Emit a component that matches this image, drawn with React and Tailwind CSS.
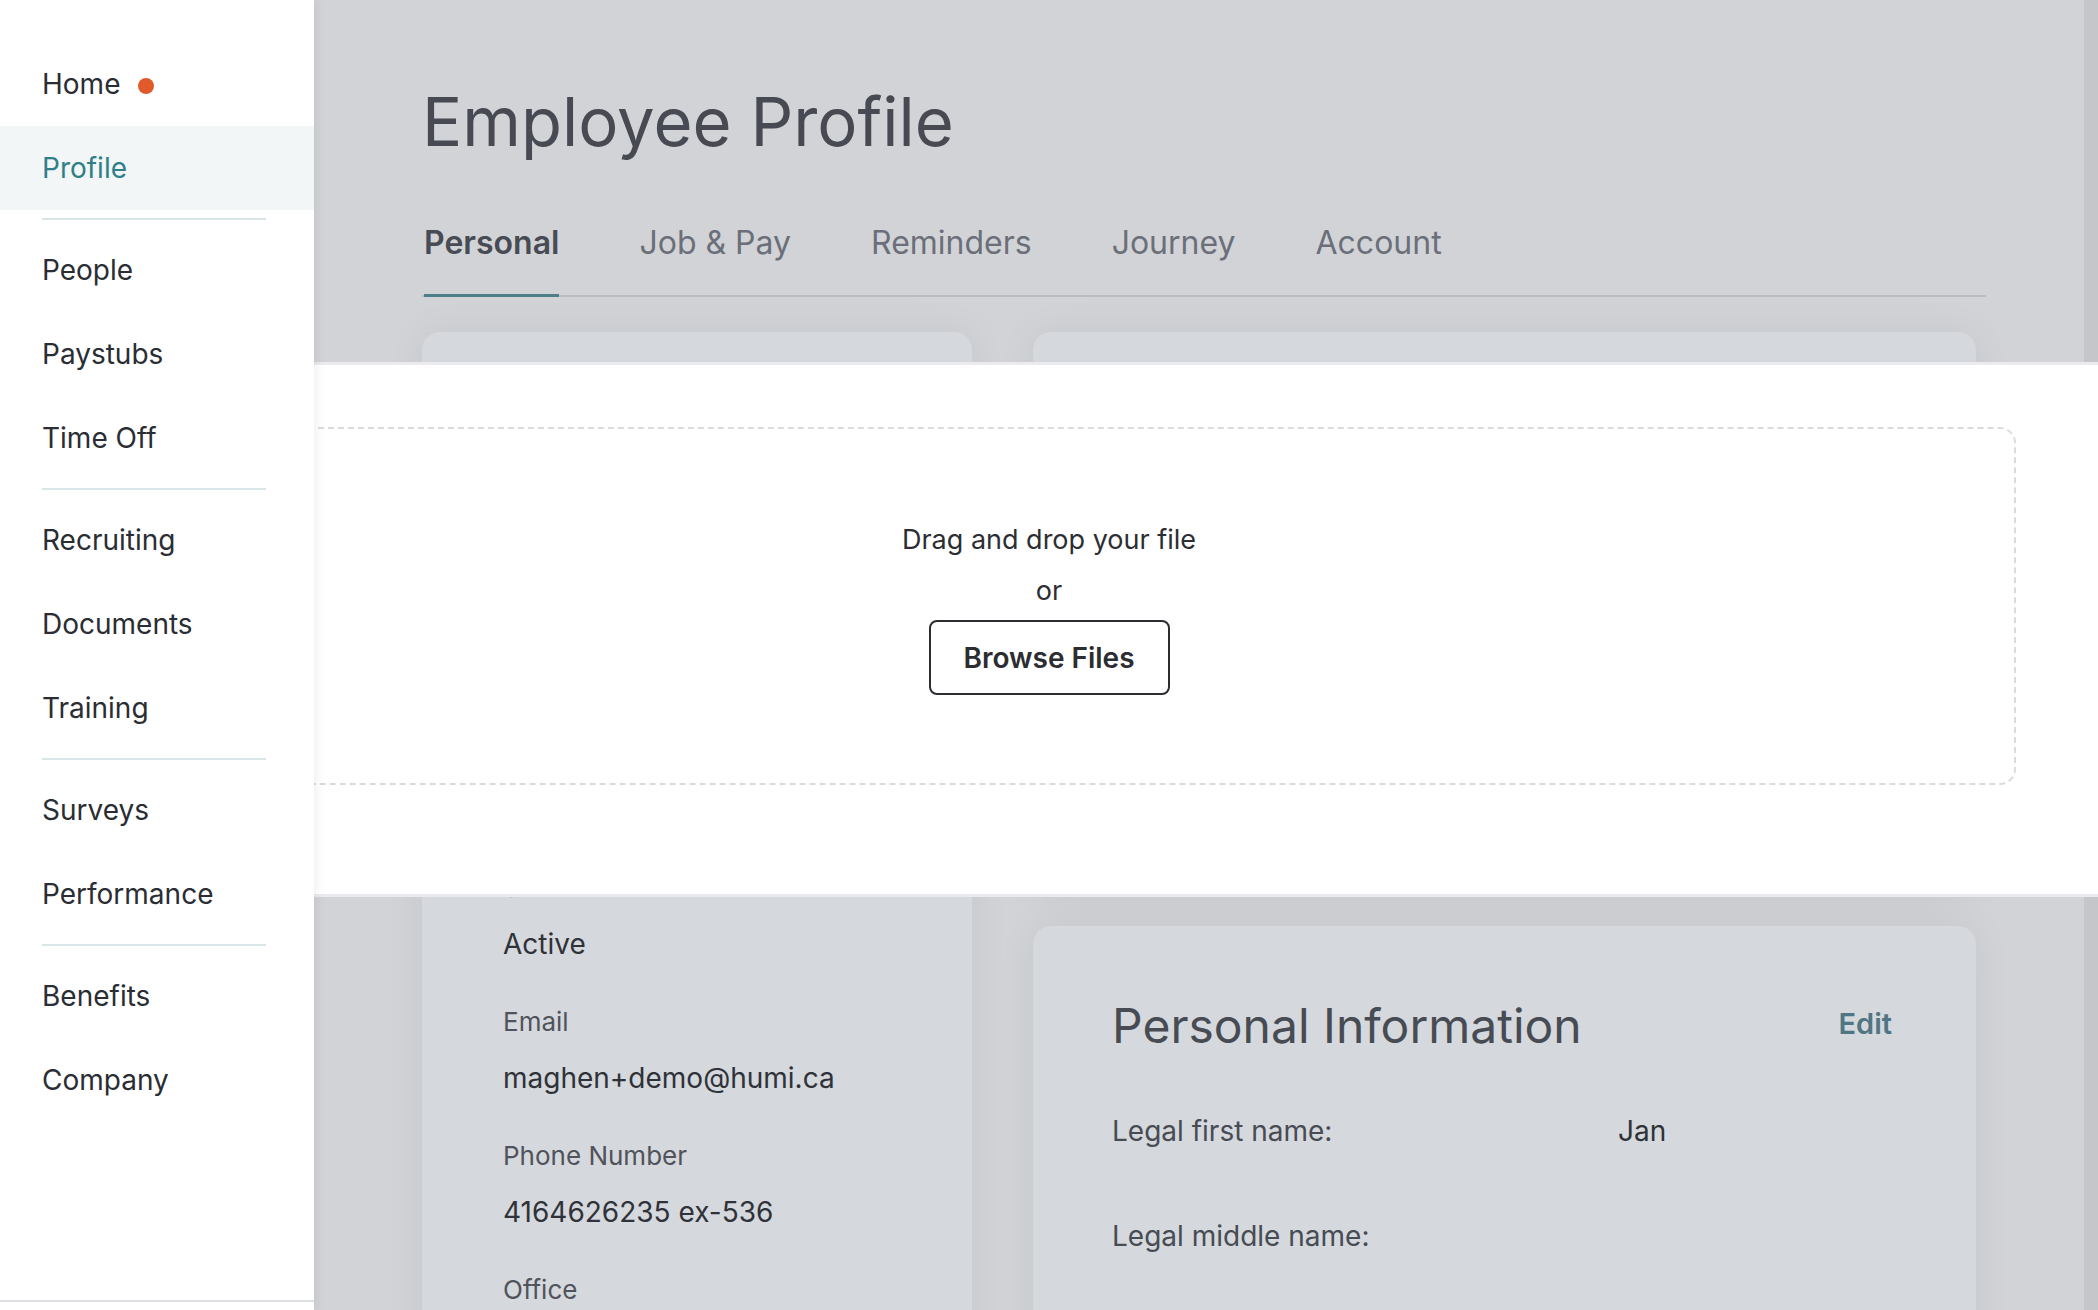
import React from 'react'

const navGroups = [
  ['Home', 'Profile'],
  ['People', 'Paystubs', 'Time Off'],
  ['Recruiting', 'Documents', 'Training'],
  ['Surveys', 'Performance'],
  ['Benefits', 'Company'],
]

const tabs = ['Personal', 'Job & Pay', 'Reminders', 'Journey', 'Account']

const contactFields = [
  { label: 'Status', value: 'Active' },
  { label: 'Email', value: 'maghen+demo@humi.ca' },
  { label: 'Phone Number', value: '4164626235 ex-536' },
  { label: 'Office' },
]

const personalRows = [
  { label: 'Legal first name:', value: 'Jan' },
  { label: 'Legal middle name:', value: '' },
]

function Sidebar() {
  return (
    <aside className="relative z-20 flex h-[1310px] w-[314px] shrink-0 flex-col bg-white pt-[42px] shadow-[3px_0_10px_rgba(0,0,0,0.06)]">
      {navGroups.map((group, gi) => (
        <div key={gi}>
          {gi > 0 && <div className="my-[8px] ml-[42px] mr-[48px] h-[2px] bg-[#d9e6e8]" />}
          {group.map(item => {
            const active = item === 'Profile'
            return (
              <div
                key={item}
                className={`flex h-[84px] items-center pl-[42px] text-[28px] ${active ? 'bg-[#f2f6f7] text-[#2f7f88]' : 'text-[#2a2d33]'}`}
              >
                {item}
                {item === 'Home' && <span className="ml-[18px] mt-[4px] h-[16px] w-[16px] rounded-full bg-[#e05a2c]" />}
              </div>
            )
          })}
        </div>
      ))}
      <div className="mt-auto h-[10px] border-t-2 border-[#dedfe2]" />
    </aside>
  )
}

function Field({ label, value }) {
  return (
    <div className="mb-[44px]">
      <div className="text-[26px] leading-[34px] text-[#50535b]">{label}</div>
      {value && <div className="mt-[22px] text-[28px] leading-[34px] text-[#2f3238]">{value}</div>}
    </div>
  )
}

function UploadModal() {
  return (
    <div className="absolute left-0 right-0 top-[362px] z-10 border-y-[3px] border-[#ebebef] bg-white px-[82px] pb-[109px] pt-[62px]">
      <div className="flex h-[358px] flex-col items-center rounded-[16px] border-2 border-dashed border-[#dadbde] pt-[94px]">
        <div className="text-[27px] leading-[34px] text-[#2c2e33]">Drag and drop your file</div>
        <div className="mt-[17px] text-[27px] leading-[34px] text-[#2c2e33]">or</div>
        <button className="mt-[12px] flex h-[75px] w-[241px] items-center justify-center rounded-[8px] border-2 border-[#2b2d31] bg-white text-[28px] font-semibold text-[#2b2d31]">
          Browse Files
        </button>
      </div>
    </div>
  )
}

export default function App() {
  return (
    <div className="relative h-[1310px] w-full overflow-hidden font-['Inter',sans-serif]">
      <div className="flex h-full">
        <Sidebar />
        <main className="flex flex-1 bg-[#d2d3d7]">
          <div className="flex-1 pl-[108px]">
            <h1 className="pt-[88px] text-[67px] font-normal leading-none text-[#474a52]">Employee Profile</h1>

            {/* Tabs */}
            <div className="mt-[72px] flex w-[1564px] gap-[80px] border-b-2 border-[#bcbdc2] pl-[2px]">
              {tabs.map(t => {
                const active = t === 'Personal'
                return (
                  <div
                    key={t}
                    className={`-mb-[2px] pb-[35px] text-[32px] leading-none ${active ? 'border-b-[3px] border-[#4c7f88] font-semibold text-[#474b53]' : 'border-b-[3px] border-transparent text-[#6b6f79]'}`}
                  >
                    {t}
                  </div>
                )
              })}
            </div>

            {/* Cards */}
            <div className="mt-[35px] flex w-[1554px] items-start gap-[61px]">
              <div className="w-[550px] shrink-0 rounded-[18px] bg-[#d5d8dc] px-[81px] pb-[80px] shadow-[0_0_40px_rgba(0,0,0,0.06)]">
                <div className="flex h-[539px] flex-col items-center justify-center">
                  <div className="h-[180px] w-[180px] rounded-full bg-[#c4c8cd]" />
                  <div className="mt-[24px] text-[36px] text-[#474a52]">Jan Levinson</div>
                  <div className="mt-[8px] text-[26px] text-[#50535b]">Sales Manager</div>
                </div>
                {contactFields.map(f => <Field key={f.label} {...f} />)}
              </div>

              <div className="flex flex-1 flex-col gap-[32px]">
                <div className="h-[562px] rounded-[18px] bg-[#d5d8dc] shadow-[0_0_40px_rgba(0,0,0,0.06)]" />
                <div className="rounded-[18px] bg-[#d5d8dc] pb-[140px] pl-[79px] pr-[84px] pt-[76px] shadow-[0_0_40px_rgba(0,0,0,0.06)]">
                  <div className="flex items-start justify-between">
                    <h2 className="text-[48px] font-normal leading-none text-[#474b53]">Personal Information</h2>
                    <span className="mt-[7px] text-[29px] font-semibold leading-none text-[#4f7682]">Edit</span>
                  </div>
                  <div className="mt-[64px] flex flex-col gap-[71px]">
                    {personalRows.map(r => (
                      <div key={r.label} className="grid grid-cols-[506px_1fr] text-[28px] leading-[34px]">
                        <span className="text-[#474b53]">{r.label}</span>
                        <span className="text-[#2f3137]">{r.value}</span>
                      </div>
                    ))}
                  </div>
                </div>
              </div>
            </div>
          </div>
          <div className="w-[14px] shrink-0 bg-[#c5c6ca]" />
        </main>
      </div>
      <UploadModal />
    </div>
  )
}
